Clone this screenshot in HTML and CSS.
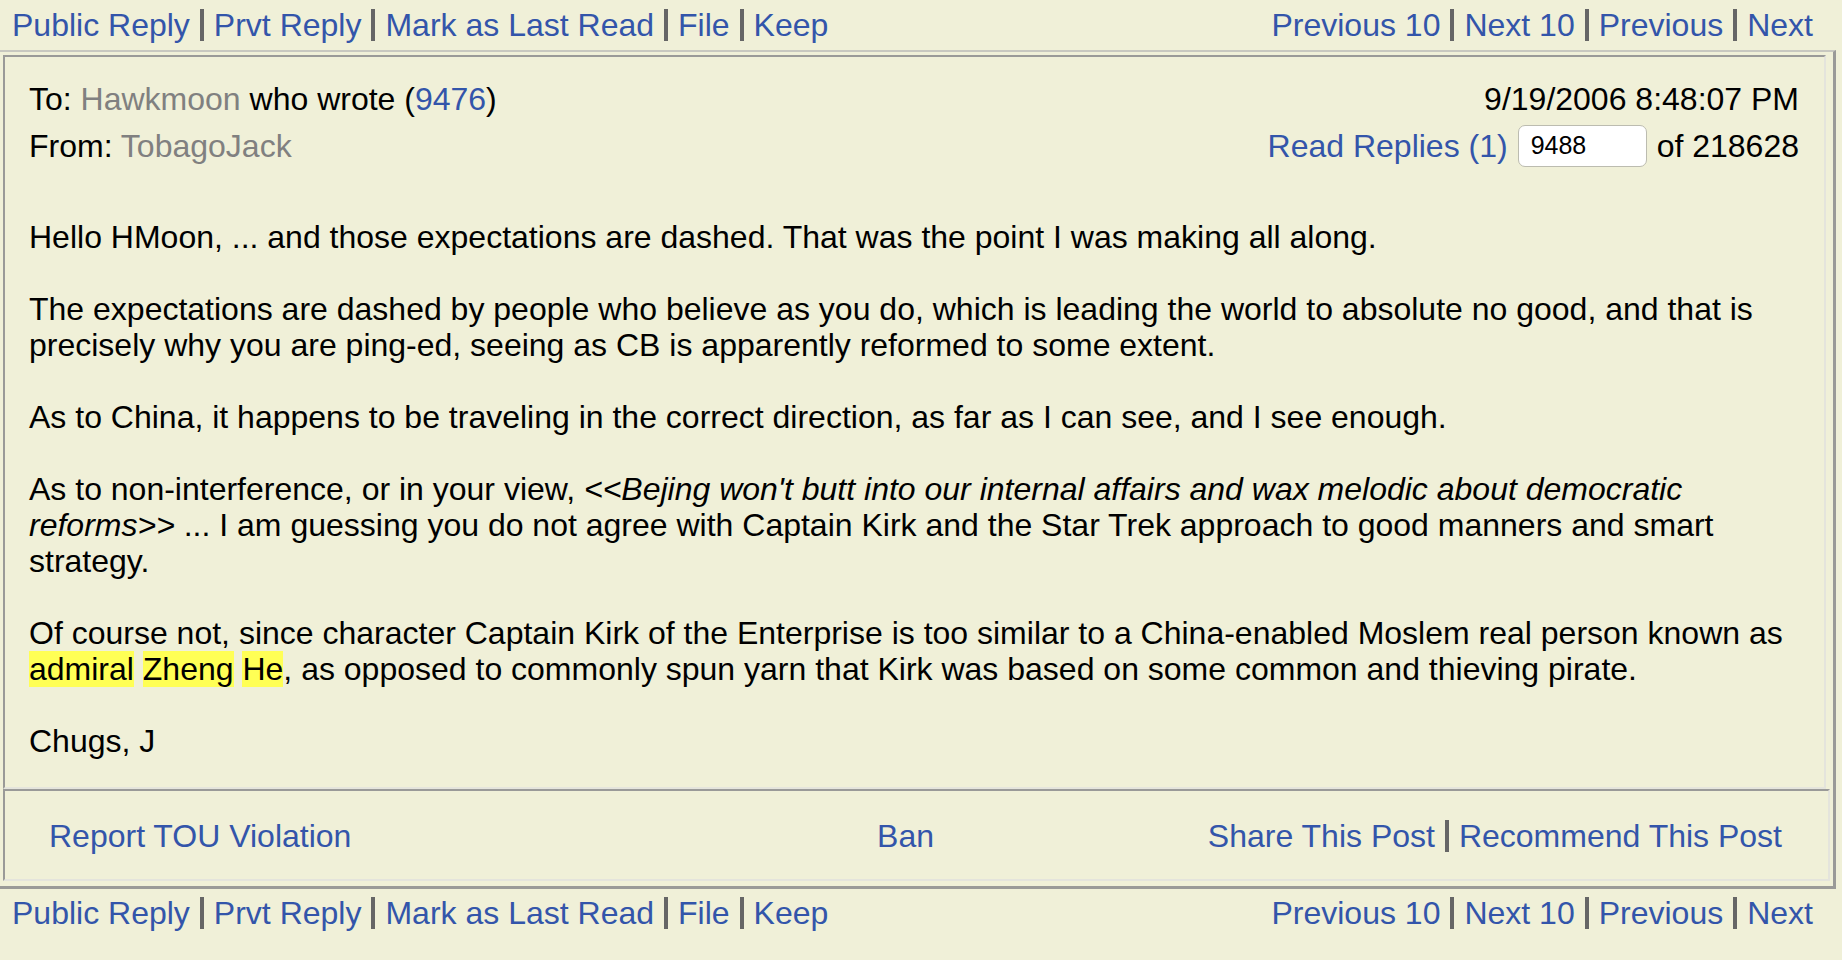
FILE: index.html
```html
<!DOCTYPE html>
<html>
<head>
<meta charset="utf-8">
<title>Message 9488</title>
<link rel="stylesheet" href="styles.css">
</head>
<body>
<div class="nav">
  <div class="nav-group">
    <a href="#">Public Reply</a><span class="sep"></span><a href="#">Prvt Reply</a><span class="sep"></span><a href="#">Mark as Last Read</a><span class="sep"></span><a href="#">File</a><span class="sep"></span><a href="#">Keep</a>
  </div>
  <div class="nav-group">
    <a href="#">Previous 10</a><span class="sep"></span><a href="#">Next 10</a><span class="sep"></span><a href="#">Previous</a><span class="sep"></span><a href="#">Next</a>
  </div>
</div>

<div class="outer">
  <div class="cell msg">
    <div class="head-row">
      <div>To: <span class="name">Hawkmoon</span> who wrote (<a href="#">9476</a>)</div>
      <div>9/19/2006 8:48:07 PM</div>
    </div>
    <div class="head-row">
      <div>From: <span class="name">TobagoJack</span></div>
      <div class="replies"><a href="#">Read Replies (1)</a><input class="msgnum" type="text" value="9488"><span>of 218628</span></div>
    </div>
    <div class="body">
      <p>Hello HMoon, ... and those expectations are dashed. That was the point I was making all along.</p>
      <p>The expectations are dashed by people who believe as you do, which is leading the world to absolute no good, and that is precisely why you are ping-ed, seeing as CB is apparently reformed to some extent.</p>
      <p>As to China, it happens to be traveling in the correct direction, as far as I can see, and I see enough.</p>
      <p>As to non-interference, or in your view, <i>&lt;&lt;Bejing won't butt into our internal affairs and wax melodic about democratic reforms&gt;&gt;</i> ... I am guessing you do not agree with Captain Kirk and the Star Trek approach to good manners and smart strategy.</p>
      <p>Of course not, since character Captain Kirk of the Enterprise is too similar to a China-enabled Moslem real person known as <span class="hl">admiral</span> <span class="hl">Zheng</span> <span class="hl">He</span>, as opposed to commonly spun yarn that Kirk was based on some common and thieving pirate.</p>
      <p>Chugs, J</p>
    </div>
  </div>
  <div class="cell foot">
    <div class="foot-left"><a href="#">Report TOU Violation</a></div>
    <div class="foot-center"><a href="#">Ban</a></div>
    <div class="foot-right"><a href="#">Share This Post</a><span class="sep"></span><a href="#">Recommend This Post</a></div>
  </div>
</div>

<div class="nav nav-bottom">
  <div class="nav-group">
    <a href="#">Public Reply</a><span class="sep"></span><a href="#">Prvt Reply</a><span class="sep"></span><a href="#">Mark as Last Read</a><span class="sep"></span><a href="#">File</a><span class="sep"></span><a href="#">Keep</a>
  </div>
  <div class="nav-group">
    <a href="#">Previous 10</a><span class="sep"></span><a href="#">Next 10</a><span class="sep"></span><a href="#">Previous</a><span class="sep"></span><a href="#">Next</a>
  </div>
</div>
</body>
</html>
```

FILE: styles.css
```css
html, body {
  margin: 0;
  padding: 0;
  background: #f0f0d8;
}
body {
  font-family: "Liberation Sans", Arial, Helvetica, sans-serif;
  font-size: 32px;
  line-height: 36px;
  color: #000;
}
a {
  color: #3355aa;
  text-decoration: none;
}
.nav {
  display: flex;
  justify-content: space-between;
  align-items: center;
  height: 50px;
  padding: 0 29px 0 12px;
}
.nav-bottom {
  height: 48px;
}
.nav-group {
  display: flex;
  align-items: center;
}
.sep {
  display: inline-block;
  width: 4px;
  height: 32px;
  background: #666;
  margin: 0 10px;
}
.outer {
  margin-right: 6px;
  border-style: solid;
  border-width: 2px 3px 3px 0;
  border-color: #c8c8c0 #9a9a98 #9a9a98 #c8c8c0;
  padding: 3px 3px 5px 3px;
}
.cell {
  border-style: solid;
  border-width: 2px;
  border-color: #9a9a98 #e4e4dc #e4e4dc #9a9a98;
}
.msg {
  margin-right: 4px;
  padding: 18px 25px 28px 24px;
}
.head-row {
  display: flex;
  justify-content: space-between;
  align-items: center;
  height: 47px;
}
.name {
  color: #808080;
}
.replies {
  display: flex;
  align-items: center;
}
.msgnum {
  box-sizing: border-box;
  width: 129px;
  height: 42px;
  margin: 0 10px;
  padding: 0 12px;
  border: 1px solid #bcbcb0;
  border-radius: 7px;
  background: #fff;
  font-family: "Liberation Sans", Arial, sans-serif;
  font-size: 25px;
  color: #000;
}
.body {
  margin-top: 50px;
}
.body p {
  margin: 0 0 36px;
}
.body p:last-child {
  margin-bottom: 0;
}
.hl {
  background: #ffff55;
}
.foot {
  display: grid;
  grid-template-columns: 1fr auto 1fr;
  align-items: center;
  padding: 27px 46px 25px 44px;
}
.foot-center {
  padding-right: 20px;
}
.foot-right {
  display: flex;
  justify-content: flex-end;
  align-items: center;
}
```
